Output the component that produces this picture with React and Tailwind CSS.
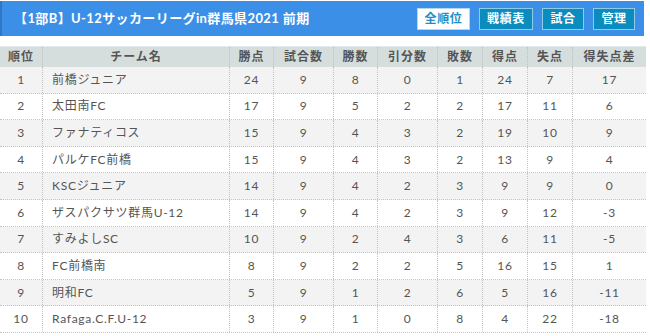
import React from 'react';

const rows = [
  [1, '前橋ジュニア', 24, 9, 8, 0, 1, 24, 7, 17],
  [2, '太田南FC', 17, 9, 5, 2, 2, 17, 11, 6],
  [3, 'ファナティコス', 15, 9, 4, 3, 2, 19, 10, 9],
  [4, 'パルケFC前橋', 15, 9, 4, 3, 2, 13, 9, 4],
  [5, 'KSCジュニア', 14, 9, 4, 2, 3, 9, 9, 0],
  [6, 'ザスパクサツ群馬U-12', 14, 9, 4, 2, 3, 9, 12, -3],
  [7, 'すみよしSC', 10, 9, 2, 4, 3, 6, 11, -5],
  [8, 'FC前橋南', 8, 9, 2, 2, 5, 16, 15, 1],
  [9, '明和FC', 5, 9, 1, 2, 6, 5, 16, -11],
  [10, 'Rafaga.C.F.U-12', 3, 9, 1, 0, 8, 4, 22, -18],
];

const heads = ['順位', 'チーム名', '勝点', '試合数', '勝数', '引分数', '敗数', '得点', '失点', '得失点差'];

const cols = 'grid grid-cols-[42px_187px_44px_60px_44px_60px_45px_45px_45px_1fr]';

const App = () => {
  return (
    <div className="w-[650px] h-[336px] bg-white overflow-hidden font-[Lato,'Noto_Sans_CJK_JP',sans-serif] text-[#555]">
      {/* title bar */}
      <div className="mt-px w-[644px] h-[35px] bg-[#3b8fe6] border-l-2 border-[#2f76c8] flex items-center justify-between pl-3 pr-[9px]">
        <h1 className="text-white font-bold text-[13px] tracking-[0.03em]">【1部B】U-12サッカーリーグin群馬県2021 前期</h1>
        <div className="flex gap-[9px]">
          <button className="w-[53px] h-[22px] bg-white border border-[#b9d6e8] text-[#1f8ec8] font-bold text-[12px] tracking-[0.05em]">全順位</button>
          <button className="w-[54px] h-[22px] bg-[#0a8cbf] border border-[#8fcbe6] text-white font-bold text-[12px] tracking-[0.05em]">戦績表</button>
          <button className="w-[42px] h-[22px] bg-[#0a8cbf] border border-[#8fcbe6] text-white font-bold text-[12px] tracking-[0.05em]">試合</button>
          <button className="w-[42px] h-[22px] bg-[#0a8cbf] border border-[#8fcbe6] text-white font-bold text-[12px] tracking-[0.05em]">管理</button>
        </div>
      </div>

      {/* standings table */}
      <div className="mt-[10px] w-[646px] text-[12px]">
        <div className={`${cols} h-[21px] bg-[#d5dedd] border-t border-[#e3e9e8] font-bold`}>
          {heads.map((h, i) => (
            <div key={h} className={`flex items-center justify-center tracking-[0.08em] ${i > 0 ? 'border-l border-dotted border-[#b9c3c2]' : ''}`}>{h}</div>
          ))}
        </div>
        {rows.map((r, ri) => (
          <div key={r[0]} className={`${cols} h-[26.6px] border-b border-dotted border-[#c4c4c4] ${ri % 2 === 0 ? 'bg-[#f3f3f3]' : 'bg-white'}`}>
            {r.map((v, i) => (
              <div
                key={i}
                className={`flex items-center tracking-[0.06em] ${i === 1 ? 'justify-start pl-[9px]' : 'justify-center'} ${i > 0 ? 'border-l border-dotted border-[#c4c4c4]' : ''}`}
              >
                {v}
              </div>
            ))}
          </div>
        ))}
      </div>
    </div>
  );
};

export default App;
